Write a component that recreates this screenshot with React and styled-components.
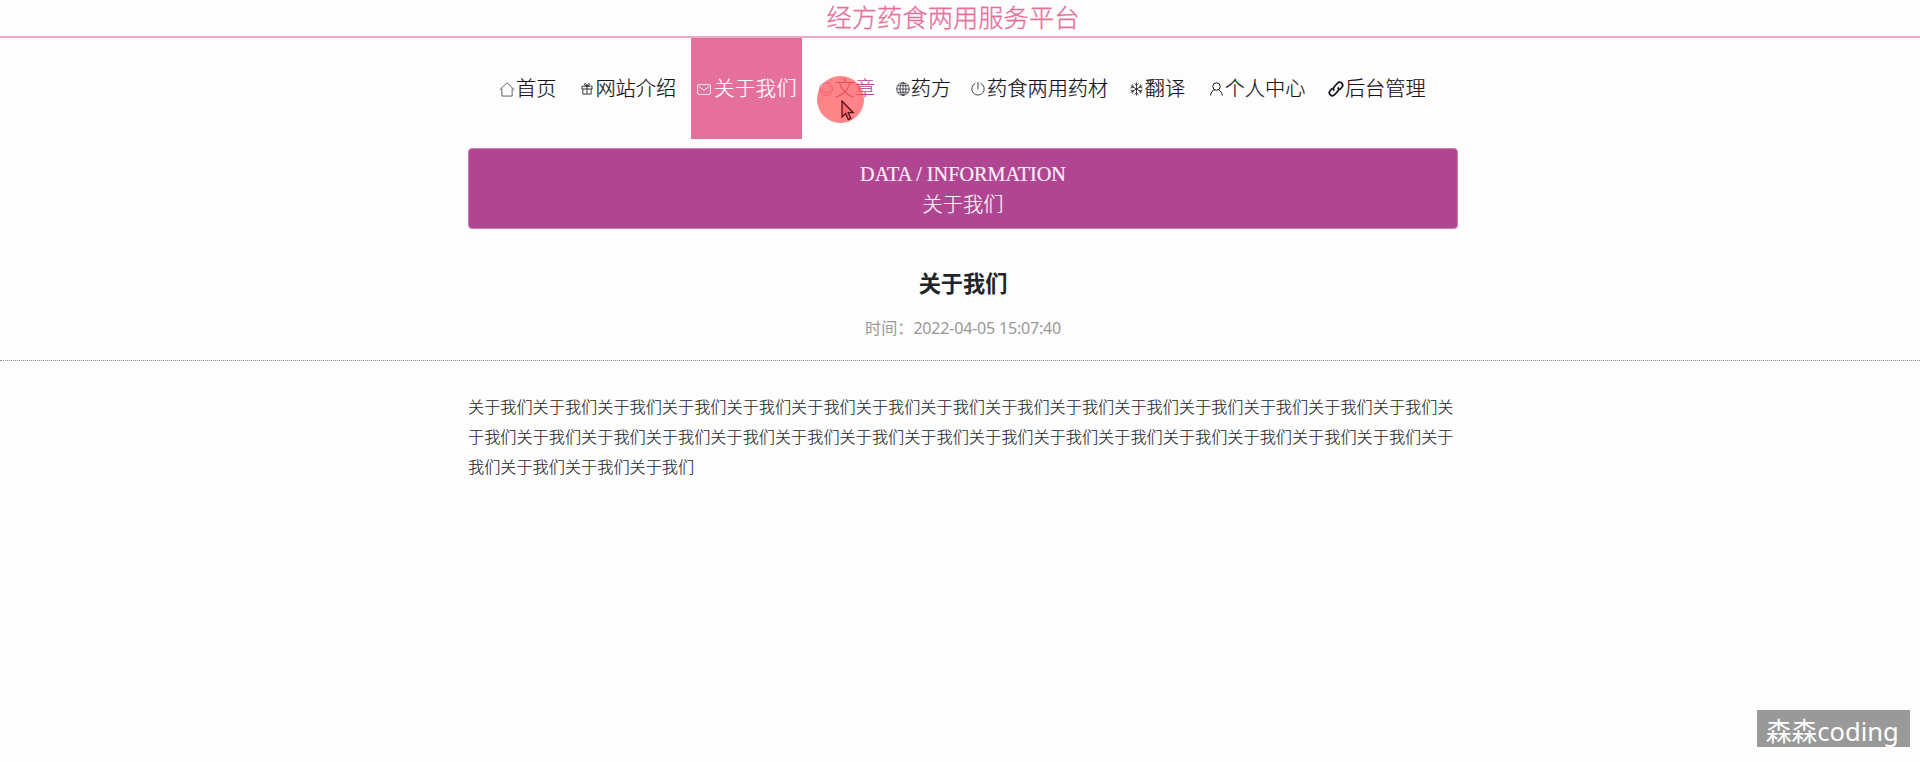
import React from "react";
import styled, { createGlobalStyle } from "styled-components";

const Global = createGlobalStyle`
  * { box-sizing: border-box; }
  body { margin: 0; background: #fefdfe; color: #212529; overflow: hidden;
    font-family: "Noto Sans", "Noto Sans CJK SC", sans-serif; }
`;
const Page = styled.div`
  position: relative;
  height: 762px;
`;
const SiteTitle = styled.h1`
  height: 38px;
  margin: 0;
  padding-right: 14px;
  border-bottom: 2px solid #eda9c5;
  color: #e5709b;
  font-family: "Noto Sans CJK SC", sans-serif;
  font-size: 25.3px;
  font-weight: 300;
  -webkit-text-stroke: 0.3px currentColor;
  line-height: 33px;
  text-align: center;
`;
const Nav = styled.nav`
  display: flex;
  gap: 10px;
  height: 101px;
  padding-left: 492px;
`;
const NavItem = styled.a`
  display: flex;
  align-items: center;
  padding: 0 5px 3px;
  background: ${(p) => (p.$active ? "#e5709b" : "transparent")};
  color: ${(p) => (p.$active ? "#fff" : p.$hover ? "#b04592" : "#16141a")};
  font-family: "Noto Sans CJK SC", sans-serif;
  font-size: 20.2px;
  font-weight: 300;
  letter-spacing: ${(p) => (p.$active ? "0.6px" : "0")};
  -webkit-text-stroke: ${(p) => (p.$hover ? "0" : "0.2px")} currentColor;
  white-space: nowrap;
`;
const IconSlot = styled.span`
  display: flex;
  flex: none;
  width: ${(p) => p.$width}px;
  padding-top: 4px;
`;
const Glyph = styled.svg`
  display: block;
  fill: none;
  stroke: currentColor;
  overflow: visible;
`;
const Container = styled.div`
  width: 990px;
  margin-left: 468px;
`;
const Banner = styled.header`
  height: 81px;
  margin-top: 9px;
  padding-top: 10px;
  border: 1px solid #cf7fb2;
  border-radius: 4px;
  background: #b04592;
  color: #fdeef9;
  font-family: "Liberation Serif", "Noto Sans CJK SC", serif;
  font-size: 20.2px;
  font-weight: 300;
  -webkit-text-stroke: 0.2px currentColor;
  line-height: 30.5px;
  text-align: center;
`;
const BannerLine = styled.div``;
const ArticleHead = styled.div`
  height: 132px;
  padding: 36px 0 0 6px;
  border-bottom: 1px dotted #8f8792;
  text-align: center;
`;
const Heading = styled.h2`
  margin: 0;
  font-size: 22.2px;
  font-weight: 700;
  line-height: 38px;
`;
const Time = styled.p`
  margin: 11px 0 0;
  color: #999;
  font-size: 16.1px;
  line-height: 28px;
`;
const Digits = styled.span`
  letter-spacing: -0.24px;
`;
const Body = styled.p`
  margin: 30px 0 0;
  color: #212529;
  font-family: "Noto Sans CJK SC", sans-serif;
  font-size: 16.16px;
  font-weight: 300;
  -webkit-text-stroke: 0.12px currentColor;
  line-height: 30.2px;
  word-break: break-all;
`;
const ClickSpot = styled.div`
  position: absolute;
  left: 817px;
  top: 76px;
  width: 47px;
  height: 47px;
  border-radius: 50%;
  background: rgba(255, 80, 84, 0.7);
`;
const Pointer = styled.svg`
  position: absolute;
  left: 24px;
  top: 24px;
`;
const Watermark = styled.div`
  position: absolute;
  right: 10px;
  top: 710px;
  width: 153px;
  height: 37px;
  padding-left: 9px;
  background: #999;
  color: #fff;
  font-size: 25.6px;
  line-height: 44px;
  white-space: nowrap;
`;

const icons = {
  home: <Glyph width="16" height="15" viewBox="0 0 17 16" strokeWidth=".7"><path d="M.8 8.3 8.5.8l7.7 7.5M3 7v8h11V7" /></Glyph>,
  gift: <Glyph width="12" height="12" viewBox="0 0 13 13" strokeWidth=".9"><path d="M1 3.5h11v3H1zM2 6.5V12h9V6.5M6.5 3.5V12M6.5 3.5C5 3 3.2 2.4 3.6 1.2S6 .8 6.5 3.5C7 .8 9 0 9.4 1.2S8 3 6.5 3.5" /></Glyph>,
  mail: <Glyph width="14" height="11" viewBox="0 0 14 11" strokeWidth=".9"><rect x=".6" y=".6" width="12.8" height="9.8" rx="1" /><path d="m2 2.5 5 4 5-4" /></Glyph>,
  smile: <Glyph width="14" height="14" viewBox="0 0 14 14" strokeWidth=".8"><circle cx="7" cy="7" r="6.3" /><path d="M3.5 8c.7 3.5 6.3 3.5 7 0M4.5 4v1M9.5 4v1" /></Glyph>,
  globe: <Glyph width="14" height="14" viewBox="0 0 14 14" strokeWidth=".7"><circle cx="7" cy="7" r="6.3" /><ellipse cx="7" cy="7" rx="3" ry="6.3" /><path d="M7 .7v12.6M.7 7h12.6M1.6 3.8h10.8M1.6 10.2h10.8" /></Glyph>,
  power: <Glyph width="14" height="14" viewBox="0 0 14 14" strokeWidth=".8"><path d="M4.3 1.3a6.2 6.2 0 1 0 5.4 0M7 0v7.5" /></Glyph>,
  snow: <Glyph width="13" height="14" viewBox="0 0 13 14" strokeWidth=".8"><path d="M6.5.5v13M.7 3.6l11.6 6.8M12.3 3.6.7 10.4M4.5 1.3l2 2 2-2M4.5 12.7l2-2 2 2M.5 6l2.8-.8L2.5 2.4M12.5 6l-2.8-.8.8-2.8M.5 8l2.8.8-.8 2.8M12.5 8l-2.8.8.8 2.8" /></Glyph>,
  user: <Glyph width="13" height="14" viewBox="0 0 13 14" strokeWidth="1"><circle cx="6.5" cy="4.5" r="3.7" /><path d="M.6 13.5C.8 10 2.8 8.2 5 7.8M8.3 7.8c2 1.3 3.6 2.5 4 5.7" /></Glyph>,
  link: <Glyph width="16" height="16" viewBox="0 0 16 16" strokeWidth="1.7"><path d="M6.3 9.7C4.9 8.3 5 7 6.2 5.8l3.2-3.5c2.8-2.8 7 1 4.5 4l-2.2 2.5M9.7 6.3c1.4 1.4 1.3 2.7.1 3.9l-3.2 3.5c-2.8 2.8-7-1-4.5-4l2.2-2.5" /></Glyph>,
};

const items = [
  { icon: "home", label: "首页", slot: 19, inset: 2 },
  { icon: "gift", label: "网站介绍", slot: 19, inset: 5 },
  { icon: "mail", label: "关于我们", slot: 18, inset: 1 },
  { icon: "smile", label: "文章", slot: 17.5, inset: 2 },
  { icon: "globe", label: "药方", slot: 15.5, inset: 0.5 },
  { icon: "power", label: "药食两用药材", slot: 16, inset: 0 },
  { icon: "snow", label: "翻译", slot: 16.5, inset: 1.5 },
  { icon: "user", label: "个人中心", slot: 19.5, inset: 5 },
  { icon: "link", label: "后台管理", slot: 19.5, inset: 3 },
];
const Inset = styled.span`
  margin-left: ${(p) => p.$left || 0}px;
`;

export default function App() {
  return (
    <Page>
      <Global />
      <SiteTitle>经方药食两用服务平台</SiteTitle>
      <Nav>
        {items.map((it) => (
          <NavItem key={it.label} $active={it.icon === "mail"} $hover={it.icon === "smile"}>
            <IconSlot $width={it.slot}><Inset $left={it.inset}>{icons[it.icon]}</Inset></IconSlot>
            {it.label}
          </NavItem>
        ))}
      </Nav>
      <Container>
        <Banner>
          <BannerLine>DATA / INFORMATION</BannerLine>
          <BannerLine>关于我们</BannerLine>
        </Banner>
      </Container>
      <ArticleHead>
        <Heading>关于我们</Heading>
        <Time>时间：<Digits>2022-04-05 15:07:40</Digits></Time>
      </ArticleHead>
      <Container>
        <Body>{"关于我们".repeat(34)}</Body>
      </Container>
      <ClickSpot>
        <Pointer width="14" height="21" viewBox="0 0 14 21" fill="#f46a70" stroke="#5c1018" strokeWidth="1.3">
          <path d="M1 1v16l3.7-3.4 2.6 6 2.6-1.2-2.6-5.7h5z" />
        </Pointer>
      </ClickSpot>
      <Watermark>森森coding</Watermark>
    </Page>
  );
}
